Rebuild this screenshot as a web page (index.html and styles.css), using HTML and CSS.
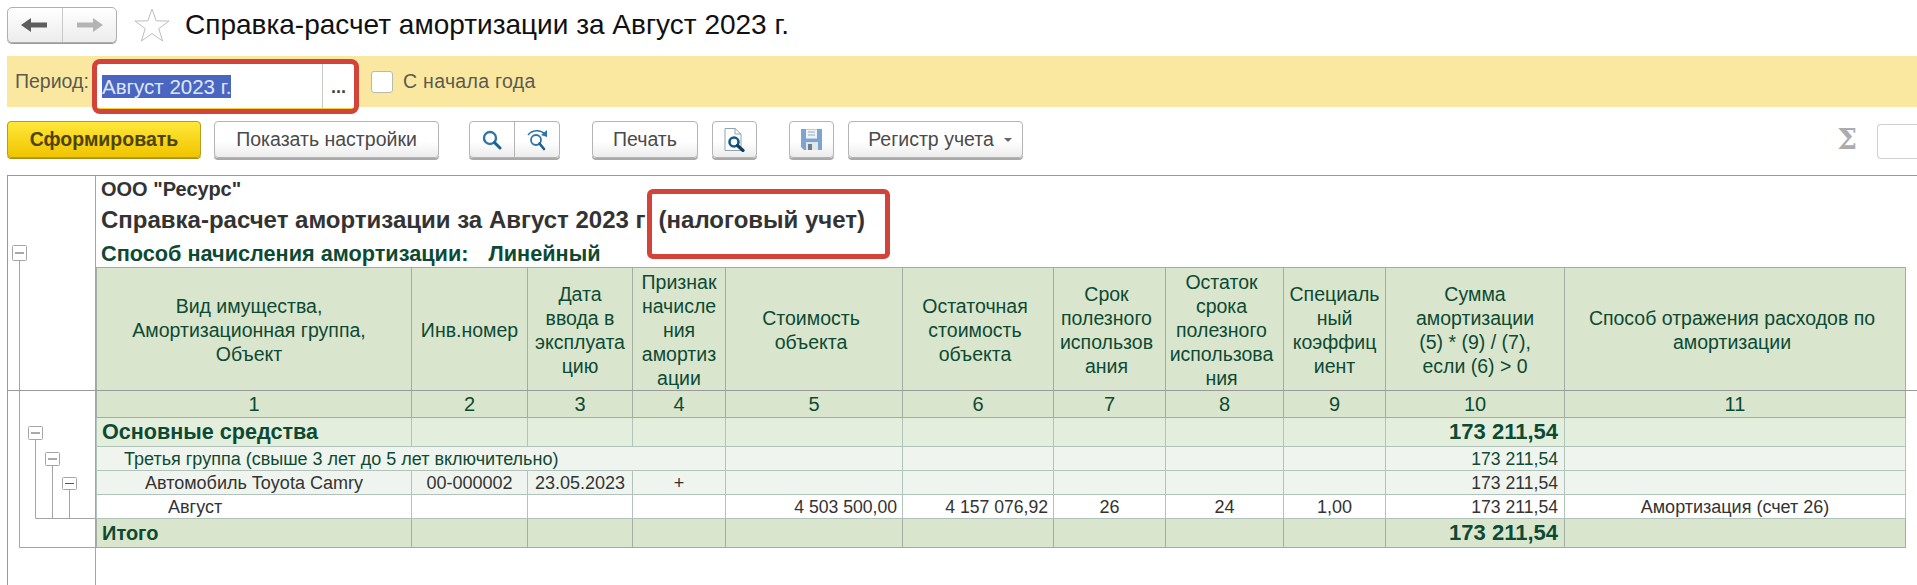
FILE: index.html
```html
<!DOCTYPE html>
<html lang="ru">
<head>
<meta charset="utf-8">
<title>Справка-расчет амортизации</title>
<link rel="stylesheet" href="styles.css">
</head>
<body>
<header class="head">
  <div class="nav">
    <span class="nav-cell">
      <svg width="30" height="20" viewBox="0 0 30 20"><path d="M1 10 L11 3 V7.5 H27 V12.5 H11 V17 Z" fill="#5e5e5e"/></svg>
    </span>
    <span class="nav-cell">
      <svg width="30" height="20" viewBox="0 0 30 20"><path d="M29 10 L19 3 V7.5 H3 V12.5 H19 V17 Z" fill="#b4b4b4"/></svg>
    </span>
  </div>
  <svg class="star" width="36" height="34" viewBox="0 0 36 34"><path d="M18 1 L22.2 12.9 L35 13 L24.8 20.6 L28.6 33 L18 25.6 L7.4 33 L11.2 20.6 L1 13 L13.8 12.9 Z" fill="#fff" stroke="#bdbdbd" stroke-width="1"/></svg>
  <h1 class="title">Справка-расчет амортизации за Август 2023 г.</h1>
</header>

<section class="bar">
  <span class="bar-label period">Период:</span>
  <div class="field">
    <span class="sel">Август 2023 г.</span>
    <span class="dots">...</span>
    <span class="mark mark-field"></span>
  </div>
  <span class="check"></span>
  <span class="bar-label from-year">С начала года</span>
</section>

<nav class="tools">
  <button class="btn primary">Сформировать</button>
  <button class="btn settings">Показать настройки</button>
  <div class="btn group">
    <span class="group-cell">
      <svg width="20" height="20" viewBox="0 0 20 20"><circle cx="8" cy="8" r="6" fill="none" stroke="#2f74a6" stroke-width="2.4"/><path d="M12.5 12.5 L18 18" stroke="#1d5f8d" stroke-width="3" stroke-linecap="round"/></svg>
    </span>
    <span class="group-cell">
      <svg width="24" height="24" viewBox="0 0 24 24"><circle cx="11" cy="12" r="5" fill="none" stroke="#2f74a6" stroke-width="1.8"/><path d="M14.5 15.5 L19 21" stroke="#1d5f8d" stroke-width="2.6" stroke-linecap="round"/><path d="M3 7 C7 2 15 1 20 6" fill="none" stroke="#2f74a6" stroke-width="1.5"/><path d="M22 2 L22 9 L16 7 Z" fill="#2f74a6"/></svg>
    </span>
  </div>
  <button class="btn print">Печать</button>
  <button class="btn icon preview">
    <svg width="22" height="24" viewBox="0 0 22 24"><path d="M1 .5 H11 L17 6 V22.5 H1 Z" fill="#fff" stroke="#8fa3b3"/><path d="M11 .5 V6 H17" fill="none" stroke="#8fa3b3"/><circle cx="10" cy="14" r="4.5" fill="#fff" stroke="#165a85" stroke-width="2.6"/><path d="M13.5 17.5 L19 22.5" stroke="#123f60" stroke-width="3.2" stroke-linecap="round"/></svg>
  </button>
  <button class="btn icon save">
    <svg width="21" height="21" viewBox="0 0 21 21"><path d="M0 0 H21 V21 H3 L0 18 Z" fill="#7ea4cd"/><rect x="5" y="0.5" width="11" height="9" fill="#eef3f8"/><path d="M7 3 H14 M7 6 H14" stroke="#9ab" stroke-width="1"/><rect x="5" y="13" width="12" height="8" fill="#dfe6ec"/><rect x="7" y="15" width="4" height="6" fill="#6d7f8e"/></svg>
  </button>
  <button class="btn register">Регистр учета<span class="caret"></span></button>
  <span class="sigma">Σ</span>
  <span class="sum-box"></span>
</nav>

<main class="sheet">
  <aside class="gutter">
    <svg class="tree" width="87" height="409" viewBox="0 0 87 409">
      <g fill="none" stroke="#a5a5a5">
        <path d="M11.5 85 V371.5 H87"/>
        <path d="M27.5 263 V342.5 H87"/>
        <path d="M44.5 289 V342.5"/>
        <path d="M61.5 313 V342.5"/>
      </g>
      <g fill="#fff" stroke="#a5a5a5">
        <rect x="4.5" y="69.5" width="14" height="15" rx="1"/>
        <rect x="20.5" y="250.5" width="14" height="13" rx="1"/>
        <rect x="37.5" y="276.5" width="14" height="13" rx="1"/>
        <rect x="54.5" y="301.5" width="14" height="12" rx="1"/>
      </g>
      <path d="M7 77 H16 M23 257 H32 M40 283 H49 M57 307.5 H66" stroke="#555"/>
    </svg>
  </aside>
  <div class="report">
    <div class="org">ООО "Ресурс"</div>
    <div class="doc-title">Справка-расчет амортизации за Август 2023 г<span class="tax">(налоговый учет)</span><span class="mark mark-tax"></span></div>
    <div class="method"><span>Способ начисления амортизации:</span><span>Линейный</span></div>
    <table class="grid">
      <colgroup>
        <col class="c1"><col class="c2"><col class="c3"><col class="c4"><col class="c5"><col class="c6"><col class="c7"><col class="c8"><col class="c9"><col class="c10"><col class="c11">
      </colgroup>
      <thead>
        <tr class="r-head">
          <th class="off-lg">Вид имущества,<br>Амортизационная группа,<br>Объект</th>
          <th>Инв.номер</th>
          <th>Дата<br>ввода в<br>эксплуата<br>цию</th>
          <th>Признак<br>начисле<br>ния<br>амортиз<br>ации</th>
          <th class="off-sm">Стоимость<br>объекта</th>
          <th class="off-sm">Остаточная<br>стоимость<br>объекта</th>
          <th class="off-sm">Срок<br>полезного<br>использов<br>ания</th>
          <th class="off-sm">Остаток<br>срока<br>полезного<br>использова<br>ния</th>
          <th>Специаль<br>ный<br>коэффиц<br>иент</th>
          <th>Сумма<br>амортизации<br>(5) * (9) / (7),<br>если (6) &gt; 0</th>
          <th class="off-sm">Способ отражения расходов по<br>амортизации</th>
        </tr>
        <tr class="r-num">
          <th>1</th><th>2</th><th>3</th><th>4</th><th>5</th><th>6</th><th>7</th><th>8</th><th>9</th><th>10</th><th>11</th>
        </tr>
      </thead>
      <tbody>
        <tr class="r-main">
          <td class="group-name">Основные средства</td><td></td><td></td><td></td><td></td><td></td><td></td><td></td><td></td><td class="num sum">173 211,54</td><td></td>
        </tr>
        <tr class="r-sub">
          <td colspan="4" class="ind1">Третья группа (свыше 3 лет до 5 лет включительно)</td><td></td><td></td><td></td><td></td><td></td><td class="num sum">173 211,54</td><td></td>
        </tr>
        <tr class="r-obj">
          <td class="ind2">Автомобиль Toyota Camry</td><td class="mid">00-000002</td><td class="mid">23.05.2023</td><td class="mid">+</td><td></td><td></td><td></td><td></td><td></td><td class="num sum">173 211,54</td><td></td>
        </tr>
        <tr class="r-row">
          <td class="ind3">Август</td><td></td><td></td><td></td><td class="num">4 503 500,00</td><td class="num">4 157 076,92</td><td class="mid">26</td><td class="mid">24</td><td class="mid">1,00</td><td class="num sum">173 211,54</td><td class="mid">Амортизация (счет 26)</td>
        </tr>
        <tr class="r-total">
          <td class="group-name total-name">Итого</td><td></td><td></td><td></td><td></td><td></td><td></td><td></td><td></td><td class="num sum">173 211,54</td><td></td>
        </tr>
      </tbody>
    </table>
  </div>
</main>
</body>
</html>
```
FILE: styles.css
```css
* { box-sizing: border-box; }
html, body { margin: 0; padding: 0; }
body {
  width: 1917px;
  height: 585px;
  overflow: hidden;
  background: #fff;
  font-family: "Liberation Sans", Arial, sans-serif;
  color: #333;
}

/* Title row */
.head {
  display: flex;
  align-items: center;
  height: 56px;
  padding: 7px 0 13px 7px;
}
.nav {
  display: flex;
  flex: none;
  width: 110px;
  height: 36px;
  border: 1px solid #b0b0b0;
  border-radius: 5px;
  background: linear-gradient(#fff, #ececec);
  box-shadow: 0 1px 0 #999;
}
.nav-cell {
  display: flex;
  flex: 1;
  align-items: center;
  justify-content: center;
}
.nav-cell + .nav-cell { border-left: 1px solid #c8c8c8; }
.star { flex: none; margin-left: 17px; }
.title {
  margin: 0 0 0 15px;
  font-size: 28px;
  font-weight: 400;
  color: #111;
  white-space: nowrap;
}

/* Yellow filter bar */
.bar {
  display: flex;
  align-items: center;
  height: 51px;
  margin-left: 7px;
  padding-left: 8px;
  background: #fbe8a0;
}
.bar-label {
  font-size: 19.5px;
  color: #5a5a50;
  white-space: nowrap;
}
.period { flex: none; width: 73px; }
.from-year { letter-spacing: 0.3px; }
.field {
  position: relative;
  display: flex;
  flex: none;
  align-items: center;
  align-self: flex-start;
  width: 257px;
  height: 46px;
  margin: 8px 0 0 9px;
  padding-left: 5px;
  background: #fff;
  border-bottom: 2px solid #f5cf3c;
}
.sel {
  display: block;
  width: 129px;
  height: 23px;
  line-height: 23px;
  background: #4a66c0;
  color: #dfe6fa;
  font-size: 20.5px;
  white-space: nowrap;
}
.dots {
  position: absolute;
  top: 0;
  bottom: 0;
  right: 0;
  width: 32px;
  border-left: 1px solid #c9c9c9;
  font-size: 18px;
  font-weight: 700;
  line-height: 46px;
  text-align: center;
  color: #444;
}
.mark {
  position: absolute;
  display: block;
  border: 5px solid #d2443a;
  border-radius: 8px;
  pointer-events: none;
}
.mark-field {
  top: -5px;
  left: -5px;
  width: 267px;
  height: 55px;
}
.check {
  flex: none;
  width: 22px;
  height: 22px;
  margin: 0 10px 0 17px;
  background: #fff;
  border: 1px solid #b9b9b0;
  border-radius: 3px;
}

/* Toolbar */
.tools {
  display: flex;
  align-items: flex-start;
  height: 68px;
  padding: 14px 0 0 7px;
}
.btn {
  display: flex;
  flex: none;
  align-items: center;
  justify-content: center;
  height: 37px;
  padding: 0;
  border: 1px solid #b4b4b4;
  border-radius: 4px;
  background: linear-gradient(#fff 55%, #ececec);
  box-shadow: 0 2px 0 #a9a9a9;
  font-family: inherit;
  font-size: 19.5px;
  color: #4a4a4a;
  white-space: nowrap;
}
.primary {
  width: 194px;
  border-color: #b79d1c;
  background: linear-gradient(#ffe83a, #f0c400);
  box-shadow: 0 1px 0 #a78f18;
  font-weight: 700;
  color: #4e4300;
}
.settings { width: 225px; margin-left: 13px; }
.group { width: 91px; margin-left: 30px; }
.group-cell {
  display: flex;
  flex: 1;
  align-items: center;
  justify-content: center;
  height: 100%;
}
.group-cell + .group-cell { border-left: 1px solid #b4b4b4; }
.print { width: 106px; margin-left: 32px; }
.preview { width: 45px; margin-left: 14px; }
.save { width: 45px; margin-left: 32px; }
.register { width: 175px; margin-left: 14px; padding-left: 9px; }
.caret {
  display: block;
  width: 0;
  height: 0;
  margin-left: 10px;
  border: 4px solid transparent;
  border-top-color: #666;
  border-bottom-width: 0;
}
.sigma {
  margin: 5px 0 0 auto;
  font-family: "DejaVu Serif", serif;
  font-size: 28px;
  line-height: 28px;
  font-weight: 700;
  color: #acacac;
}
.sum-box {
  width: 40px;
  height: 35px;
  margin: 3px 0 0 20px;
  border: 1px solid #d0d0d0;
  border-right: 0;
  border-radius: 4px 0 0 4px;
}

/* Report sheet */
.sheet {
  position: relative;
  display: flex;
  height: 410px;
  margin-left: 7px;
  border-top: 1px solid #9a9a9a;
  border-left: 1px solid #9a9a9a;
}
.sheet::after {
  content: "";
  position: absolute;
  top: 214px;
  left: 0;
  right: 0;
  height: 1px;
  background: #9a9a9a;
}
.gutter {
  flex: none;
  width: 88px;
  border-right: 1px solid #a5a5a5;
}
.tree { display: block; }
.report { flex: none; width: 1809px; }
.org {
  height: 28px;
  padding-left: 5px;
  font-size: 20px;
  font-weight: 700;
  line-height: 26px;
  color: #333;
}
.doc-title {
  position: relative;
  height: 32px;
  padding-left: 5px;
  font-size: 24px;
  font-weight: 700;
  line-height: 32px;
  color: #333;
  white-space: nowrap;
}
.tax { margin-left: 13px; }
.mark-tax {
  top: -15px;
  left: 551px;
  width: 243px;
  height: 70px;
  border-radius: 6px;
}
.method {
  display: flex;
  gap: 20px;
  height: 31px;
  padding: 2px 0 0 5px;
  font-size: 21.7px;
  font-weight: 700;
  line-height: 31px;
  color: #0d4a33;
}

/* Table */
.grid {
  width: 1809px;
  table-layout: fixed;
  border-collapse: collapse;
  font-size: 18px;
  line-height: 20px;
  color: #0d4a33;
}
.c1 { width: 315px; }
.c2 { width: 116px; }
.c3 { width: 105px; }
.c4 { width: 93px; }
.c5 { width: 177px; }
.c6 { width: 151px; }
.c7 { width: 112px; }
.c8 { width: 118px; }
.c9 { width: 102px; }
.c10 { width: 179px; }
.c11 { width: 341px; }
.grid th, .grid td {
  padding: 0;
  border: 1px solid #b1c4bb;
  overflow: hidden;
  white-space: nowrap;
}
.grid th {
  font-weight: 400;
  text-align: center;
  background: #d9e5cd;
  border-color: #a3ada6;
}
.r-head { height: 123px; }
.grid .r-head th { padding-top: 2px; font-size: 19.5px; line-height: 24px; }
.grid .r-head .off-lg { padding-right: 10px; }
.grid .r-head .off-sm { padding-right: 6px; }
.r-num { height: 27px; }
.r-num th { font-size: 20px; }
.r-main { height: 29px; }
.r-main td { background: #e4eedc; }
.r-sub { height: 24px; }
.r-sub td, .r-obj td { background: #eff5ee; }
.r-obj { height: 24px; }
.r-row { height: 24px; }
.r-row td { background: #fff; color: #333; }
.r-obj td { color: #333; }
.r-total { height: 29px; }
.r-total td { background: #d9e5cd; border-color: #a3ada6; }
.grid .group-name { padding-left: 5px; font-size: 21.6px; font-weight: 700; }
.grid .total-name { font-size: 20px; }
.grid .r-main .num, .grid .r-total .num { font-size: 22px; font-weight: 700; }
.grid .ind1 { padding-left: 27px; }
.grid .ind2 { padding-left: 48px; }
.grid .ind3 { padding-left: 71px; }
.grid .num { padding-right: 5px; font-size: 17.6px; text-align: right; }
.grid .sum { padding-right: 6px; }
.mid { text-align: center; }
```
